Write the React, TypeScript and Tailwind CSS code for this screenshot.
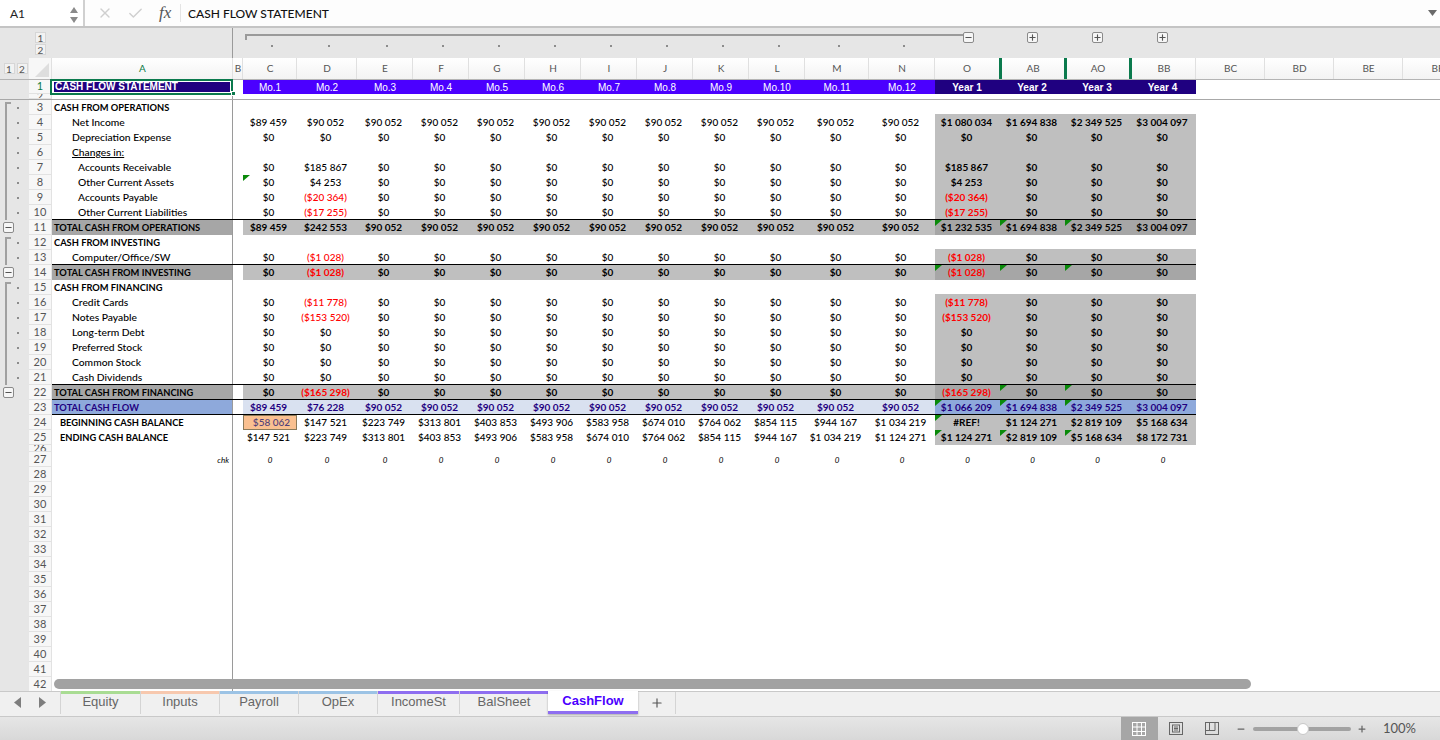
import { Check, Minus, Plus, X } from "lucide-react";

const COLS = [
  { name: "C", w: "w-[54px]" },
  { name: "D", w: "w-[60px]" },
  { name: "E", w: "w-[56px]" },
  { name: "F", w: "w-[56px]" },
  { name: "G", w: "w-[56px]" },
  { name: "H", w: "w-[56px]" },
  { name: "I", w: "w-[56px]" },
  { name: "J", w: "w-[56px]" },
  { name: "K", w: "w-[56px]" },
  { name: "L", w: "w-[56px]" },
  { name: "M", w: "w-[64px]" },
  { name: "N", w: "w-[66px]" },
];
// hw: the header cells run a little off the data columns because of the hidden-column marks
const YEARS = [
  { name: "O", w: "w-[65px]", hw: "w-[67px]" },
  { name: "AB", w: "w-[65px]", hw: "w-[65px]" },
  { name: "AO", w: "w-[65px]", hw: "w-[65px]" },
  { name: "BB", w: "w-[66px]", hw: "w-[64px]" },
];
const EXTRA = ["BC", "BD", "BE", "BF"];

const RUN = "$90 052";
// C, D and the run of ten equal months after them
const months = (c: string, d: string, rest: string = "$0") => [c, d, ...Array(10).fill(rest)];
const zeroYears = (o: string = "$0") => [o, "$0", "$0", "$0"];

const BEGIN = ["$58 062", "$147 521", "$223 749", "$313 801", "$403 853", "$493 906", "$583 958", "$674 010", "$764 062", "$854 115", "$944 167", "$1 034 219"];
const END = ["$147 521", "$223 749", "$313 801", "$403 853", "$493 906", "$583 958", "$674 010", "$764 062", "$854 115", "$944 167", "$1 034 219", "$1 124 271"];

type Kind = "head" | "item" | "total" | "flow" | "balance";
type Gutter = "top" | "line" | "minus" | "none";
type Row = {
  n: number;
  label: string;
  indent?: string;
  kind: Kind;
  underline?: boolean;
  gutter: Gutter;
  m?: string[];
  y?: string[];
  blankFill?: boolean;
  fillTop?: boolean;
  topLine?: boolean;
  flags?: number[];
};

const ROWS: Row[] = [
  { n: 3, label: "CASH FROM OPERATIONS", kind: "head", gutter: "top" },
  { n: 4, label: "Net Income", indent: "pl-[20px]", kind: "item", gutter: "line", fillTop: true, m: months("$89 459", RUN, RUN), y: ["$1 080 034", "$1 694 838", "$2 349 525", "$3 004 097"] },
  { n: 5, label: "Depreciation Expense", indent: "pl-[20px]", kind: "item", gutter: "line", m: months("$0", "$0"), y: zeroYears() },
  { n: 6, label: "Changes in:", indent: "pl-[20px]", underline: true, kind: "item", gutter: "line", blankFill: true },
  { n: 7, label: "Accounts Receivable", indent: "pl-[26px]", kind: "item", gutter: "line", m: months("$0", "$185 867"), y: zeroYears("$185 867") },
  { n: 8, label: "Other Current Assets", indent: "pl-[26px]", kind: "item", gutter: "line", m: months("$0", "$4 253"), y: zeroYears("$4 253"), flags: [0] },
  { n: 9, label: "Accounts Payable", indent: "pl-[26px]", kind: "item", gutter: "line", m: months("$0", "($20 364)"), y: zeroYears("($20 364)") },
  { n: 10, label: "Other Current Liabilities", indent: "pl-[26px]", kind: "item", gutter: "line", m: months("$0", "($17 255)"), y: zeroYears("($17 255)") },
  { n: 11, label: "TOTAL CASH FROM OPERATIONS", kind: "total", topLine: true, gutter: "minus", m: months("$89 459", "$242 553", RUN), y: ["$1 232 535", "$1 694 838", "$2 349 525", "$3 004 097"], flags: [12, 13, 14] },
  { n: 12, label: "CASH FROM INVESTING", kind: "head", gutter: "top" },
  { n: 13, label: "Computer/Office/SW", indent: "pl-[20px]", kind: "item", gutter: "line", fillTop: true, m: months("$0", "($1 028)"), y: zeroYears("($1 028)") },
  { n: 14, label: "TOTAL CASH FROM INVESTING", kind: "total", topLine: true, gutter: "minus", m: months("$0", "($1 028)"), y: zeroYears("($1 028)"), flags: [12, 13, 14] },
  { n: 15, label: "CASH FROM FINANCING", kind: "head", gutter: "top" },
  { n: 16, label: "Credit Cards", indent: "pl-[20px]", kind: "item", gutter: "line", fillTop: true, m: months("$0", "($11 778)"), y: zeroYears("($11 778)") },
  { n: 17, label: "Notes Payable", indent: "pl-[20px]", kind: "item", gutter: "line", m: months("$0", "($153 520)"), y: zeroYears("($153 520)") },
  { n: 18, label: "Long-term Debt", indent: "pl-[20px]", kind: "item", gutter: "line", m: months("$0", "$0"), y: zeroYears() },
  { n: 19, label: "Preferred Stock", indent: "pl-[20px]", kind: "item", gutter: "line", m: months("$0", "$0"), y: zeroYears() },
  { n: 20, label: "Common Stock", indent: "pl-[20px]", kind: "item", gutter: "line", m: months("$0", "$0"), y: zeroYears() },
  { n: 21, label: "Cash Dividends", indent: "pl-[20px]", kind: "item", gutter: "line", m: months("$0", "$0"), y: zeroYears() },
  { n: 22, label: "TOTAL CASH FROM FINANCING", kind: "total", topLine: true, gutter: "minus", m: months("$0", "($165 298)"), y: zeroYears("($165 298)"), flags: [13, 14] },
  { n: 23, label: "TOTAL CASH FLOW", kind: "flow", topLine: true, gutter: "none", m: months("$89 459", "$76 228", RUN), y: ["$1 066 209", "$1 694 838", "$2 349 525", "$3 004 097"], flags: [12, 13, 14] },
  { n: 24, label: "BEGINNING CASH BALANCE", indent: "pl-[8px]", kind: "balance", topLine: true, gutter: "none", m: BEGIN, y: ["#REF!", "$1 124 271", "$2 819 109", "$5 168 634"], flags: [12] },
  { n: 25, label: "ENDING CASH BALANCE", indent: "pl-[8px]", kind: "balance", gutter: "none", m: END, y: ["$1 124 271", "$2 819 109", "$5 168 634", "$8 172 731"], flags: [12, 13, 14] },
];

const EMPTY_ROWS = Array.from({ length: 15 }, (_, i) => i + 28);
const TABS = [
  { name: "Equity", w: "w-[80px]", bar: "bg-[#a9dc93]" },
  { name: "Inputs", w: "w-[79px]", bar: "bg-[#f7c8ae]" },
  { name: "Payroll", w: "w-[79px]", bar: "bg-[#9cc3e5]" },
  { name: "OpEx", w: "w-[79px]", bar: "bg-[#9cc3e5]" },
  { name: "IncomeSt", w: "w-[82px]", bar: "bg-[#8e6ef0]" },
  { name: "BalSheet", w: "w-[89px]", bar: "bg-[#8e6ef0]" },
];

function Flag() {
  return <span className="absolute left-0 top-0 h-[6px] w-[7px] bg-[#0a8a0a] [clip-path:polygon(0_0,100%_0,0_100%)]" />;
}

function RowNum({ n, active, h = "h-[15px]" }: { n: number; active?: boolean; h?: string }) {
  return (
    <div className={`flex w-[23px] shrink-0 items-center justify-center overflow-hidden border-b border-r border-[#e2e2e2] bg-[#f7f7f7] font-['Lato',sans-serif] text-[11px] ${h} ${active ? "text-[#0b7a45]" : "text-[#555]"}`}>
      {n}
    </div>
  );
}

function OutlineBox({ sign }: { sign: "minus" | "plus" }) {
  return (
    <span className="flex h-[11px] w-[11px] items-center justify-center rounded-[2px] border border-[#8a8a8a] bg-[#f6f6f6] text-[#555]">
      {sign === "minus" ? <Minus size={9} strokeWidth={3} /> : <Plus size={9} strokeWidth={3} />}
    </span>
  );
}

function GutterCell({ kind }: { kind: Gutter }) {
  if (kind === "none") return <div className="h-[15px] w-[29px] shrink-0 bg-[#e6e6e6]" />;
  if (kind === "minus") {
    return (
      <div className="flex h-[15px] w-[29px] shrink-0 items-center bg-[#e6e6e6] pl-[3px]">
        <OutlineBox sign="minus" />
      </div>
    );
  }
  return (
    <div className="flex h-[15px] w-[29px] shrink-0 bg-[#e6e6e6] pl-[5px]">
      {kind === "top" ? (
        <span className="mt-[2px] h-[13px] w-[6px] border-l-2 border-t-2 border-[#a0a0a0]" />
      ) : (
        <span className="h-[15px] w-[6px] border-l-2 border-[#a0a0a0]" />
      )}
      <span className="ml-[6px] mt-[7px] h-[2px] w-[2px] bg-[#8c8c8c]" />
    </div>
  );
}

function Sheet({ row }: { row: Row }) {
  const isTotal = row.kind === "total";
  const isFlow = row.kind === "flow";
  const labelBg = isTotal ? "bg-[#a6a6a6]" : isFlow ? "bg-[#8ea9db]" : "bg-white";
  const labelText = row.kind === "item" ? "text-[10.3px] font-medium leading-[14px] text-black" : isFlow ? "text-[9.3px] font-bold leading-[15px] text-[#1f0080]" : "text-[9.3px] font-bold leading-[15px] text-black";
  const monthBg = isTotal ? "bg-[#bfbfbf]" : isFlow ? "bg-[#d9e1f0]" : "";
  const yearBg = isTotal ? "bg-[#a6a6a6]" : isFlow ? "bg-[#8ea9db]" : "bg-[#bfbfbf]";
  const boldMonths = isTotal || isFlow;

  return (
    <div className="flex">
      <GutterCell kind={row.gutter} />
      <RowNum n={row.n} />
      <div className={`relative z-10 flex h-[15px] w-[1144px] shrink-0 font-['Lato',sans-serif] text-[10px] ${row.topLine ? "shadow-[0_-1px_0_#000]" : ""}`}>
        <div className={`w-[181px] shrink-0 overflow-hidden whitespace-nowrap border-r border-[#9a9a9a] pl-[2px] ${labelBg} ${labelText} ${row.indent ?? ""}`}>
          <span className={row.underline ? "underline" : ""}>{row.label}</span>
        </div>
        <div className="w-[10px] shrink-0" />
        {COLS.map((c, i) => {
          const v = row.m?.[i];
          const orange = row.n === 24 && i === 0;
          const color = v?.startsWith("(") ? "text-[#ff0000]" : isFlow ? "text-[#1f0080]" : orange ? "text-[#50407a]" : "text-black";
          return (
            <div key={c.name} className={`relative shrink-0 whitespace-nowrap text-center ${c.w} ${orange ? "border border-[#8a7a5a] bg-[#fac090] pl-[3px] leading-[12px]" : `pr-[3px] leading-[14px] ${monthBg}`} ${boldMonths ? "font-bold" : "font-medium"} ${color}`}>
              {row.flags?.includes(i) && <Flag />}
              {v}
            </div>
          );
        })}
        {YEARS.map((c, i) => {
          const v = row.y?.[i];
          const filled = row.y || row.blankFill;
          const color = v?.startsWith("(") ? "text-[#ff0000]" : isFlow ? "text-[#1f0080]" : "text-black";
          return (
            <div key={c.name} className={`relative shrink-0 whitespace-nowrap pr-[2px] text-center font-bold leading-[14px] ${c.w} ${filled ? yearBg : ""} ${row.fillTop ? "shadow-[0_-1px_0_#bfbfbf]" : ""} ${color}`}>
              {row.flags?.includes(i + 12) && <Flag />}
              {v}
            </div>
          );
        })}
      </div>
    </div>
  );
}

function ColHeader({ name, w, active, mark }: { name: string; w: string; active?: boolean; mark?: boolean }) {
  return (
    <div className={`flex h-full shrink-0 items-center justify-center overflow-hidden bg-gradient-to-b from-white to-[#f3f3f3] font-['Lato',sans-serif] text-[10px] ${w} ${active ? "text-[#0b7a45]" : "text-[#555]"} ${mark ? "border-r-[3px] border-[#0b7a4d]" : "border-r border-[#e0e0e0] pl-px"}`}>
      {name}
    </div>
  );
}

export default function App() {
  return (
    <div className="relative flex h-[740px] w-[1440px] flex-col overflow-hidden bg-white font-['Lato',sans-serif]">
      {/* formula bar */}
      <div className="flex h-[26px] shrink-0 items-center bg-[#fdfdfd]">
        <div className="flex h-full w-[85px] shrink-0 items-center justify-between border-r-2 border-[#d0d0d0] bg-white pl-[10px] pr-[2px] pt-px text-[12px] text-[#222]">
          <span>A1</span>
          <svg width="10" height="22" viewBox="0 0 10 22" className="mr-[2px]">
            <polygon points="5,4 9,10 1,10" fill="#8a8a8a" />
            <polygon points="5,20 9,14 1,14" fill="#8a8a8a" />
          </svg>
        </div>
        <div className="ml-[12px] flex w-[83px] shrink-0 items-center">
          <X size={16} strokeWidth={2} className="text-[#cfcfcf]" />
          <Check size={17} strokeWidth={2} className="ml-[14px] text-[#cfcfcf]" />
          <span className="ml-[15px] font-['Liberation_Serif',serif] text-[17px] italic text-[#555]">fx</span>
        </div>
        <div className="h-[18px] w-px shrink-0 bg-[#e4e4e4]" />
        <div className="ml-[7px] flex-1 pt-px text-[12px] font-medium text-[#111]">CASH FLOW STATEMENT</div>
        <svg width="10" height="8" viewBox="0 0 10 8" className="mr-[2px] shrink-0">
          <polygon points="0,1 9,1 4.5,7" fill="#6a6a6a" />
        </svg>
      </div>
      <div className="h-[2px] shrink-0 border-y border-[#c4c4c4] bg-white" />

      {/* column outline */}
      <div className="flex h-[30px] shrink-0 bg-[#e6e6e6]">
        <div className="flex w-[233px] shrink-0 border-r border-[#9a9a9a] pl-[35px] pt-[4px]">
          <div className="flex flex-col gap-px">
            <span className="flex h-[11px] w-[11px] items-center justify-center border border-[#d6d6d6] bg-[#f2f2f2] text-[10px] leading-none text-[#555]">1</span>
            <span className="flex h-[11px] w-[11px] items-center justify-center border border-[#d6d6d6] bg-[#f2f2f2] text-[10px] leading-none text-[#555]">2</span>
          </div>
        </div>
        <div className="w-[10px] shrink-0" />
        <div className="shrink-0">
          <div className="flex h-[14px] items-start pl-[2px] pt-[6px]">
            <div className="h-[6px] w-[718px] border-l-2 border-t-2 border-[#9a9a9a]" />
            <div className="-mt-[2px]"><OutlineBox sign="minus" /></div>
          </div>
          <div className="flex pl-[2px]">
            {COLS.map((c) => (
              <div key={c.name} className={`flex justify-center pt-[3px] ${c.w}`}>
                <span className="h-[2px] w-[2px] bg-[#8c8c8c]" />
              </div>
            ))}
          </div>
        </div>
        <div className="ml-[53px] flex gap-[54px] pt-[4px]">
          <OutlineBox sign="plus" />
          <OutlineBox sign="plus" />
          <OutlineBox sign="plus" />
        </div>
      </div>

      {/* grid */}
      <div className="relative flex-1 overflow-hidden">
        <div className="flex h-[21px]">
          <div className="flex w-[29px] shrink-0 items-center justify-center gap-[2px] bg-[#e6e6e6] pl-[2px]">
            <span className="flex h-[11px] w-[11px] items-center justify-center border border-[#d6d6d6] bg-[#f2f2f2] text-[10px] leading-none text-[#555]">1</span>
            <span className="flex h-[11px] w-[11px] items-center justify-center border border-[#d6d6d6] bg-[#f2f2f2] text-[10px] leading-none text-[#555]">2</span>
          </div>
          <div className="flex h-full w-[23px] shrink-0 items-end justify-end border-r border-[#e0e0e0] bg-[#f7f7f7] p-[2px]">
            <span className="h-[14px] w-[14px] bg-[#dedede] [clip-path:polygon(100%_0,100%_100%,0_100%)]" />
          </div>
          <ColHeader name="A" w="w-[181px]" active />
          <ColHeader name="B" w="w-[10px]" />
          {COLS.map((c) => <ColHeader key={c.name} name={c.name} w={c.w} />)}
          {YEARS.map((c, i) => <ColHeader key={c.name} name={c.name} w={c.hw} mark={i < 3} />)}
          {EXTRA.map((c) => <ColHeader key={c} name={c} w="w-[69px]" />)}
        </div>

        {/* row 1 */}
        <div className="flex border-t border-[#b4b4b4]">
          <div className="h-[14px] w-[29px] shrink-0 bg-[#e6e6e6]" />
          <RowNum n={1} active h="h-[14px]" />
          <div className="relative flex h-[14px] w-[1144px] shrink-0">
            <div className="w-[181px] shrink-0 border-r border-[#9a9a9a] p-[2px]">
              <div className="h-full overflow-hidden whitespace-nowrap bg-[#1f0080] pl-px font-['Liberation_Sans',sans-serif] text-[10px] font-bold leading-[10px] text-white">CASH FLOW STATEMENT</div>
            </div>
            <div className="w-[10px] shrink-0" />
            {COLS.map((c, i) => (
              <div key={c.name} className={`flex shrink-0 items-center justify-center bg-[#4b00ff] font-['Liberation_Sans',sans-serif] text-[10px] text-white ${c.w}`}>
                Mo.{i + 1}
              </div>
            ))}
            {YEARS.map((c, i) => (
              <div key={c.name} className={`flex shrink-0 items-center justify-center bg-[#1f0080] pr-px font-['Liberation_Sans',sans-serif] text-[10px] font-bold text-white ${c.w}`}>
                Year {i + 1}
              </div>
            ))}
            {/* selection frame over A1 */}
            <div className="absolute -left-[2px] -top-px h-[16px] w-[183px] border-2 border-[#0b7a4d]" />
            <div className="absolute left-[179px] top-[11px] h-[5px] w-[5px] border border-white bg-[#0b7a4d]" />
          </div>
        </div>

        {/* row 2 */}
        <div className="flex border-b border-[#a8a8a8]">
          <div className="h-[5px] w-[29px] shrink-0 bg-[#e6e6e6]" />
          <RowNum n={2} active={false} h="h-[5px]" />
          <div className="h-[5px] w-[181px] shrink-0 border-r border-[#9a9a9a]" />
        </div>

        {ROWS.map((r) => <Sheet key={r.n} row={r} />)}

        {/* row 26 */}
        <div className="flex">
          <div className="h-[7px] w-[29px] shrink-0 bg-[#e6e6e6]" />
          <RowNum n={26} h="h-[7px]" />
          <div className="h-[7px] w-[181px] shrink-0 border-r border-[#9a9a9a]" />
        </div>

        {/* row 27 */}
        <div className="flex">
          <div className="h-[15px] w-[29px] shrink-0 bg-[#e6e6e6]" />
          <RowNum n={27} />
          <div className="flex h-[15px] items-start font-['Lato',sans-serif] text-[8px] italic text-black">
            <div className="h-[15px] w-[181px] shrink-0 border-r border-[#9a9a9a] pr-[3px] text-right leading-[16px]">chk</div>
            <div className="w-[10px] shrink-0" />
            {[...COLS, ...YEARS].map((c) => (
              <div key={c.name} className={`shrink-0 text-center leading-[16px] ${c.w}`}>0</div>
            ))}
          </div>
        </div>

        {EMPTY_ROWS.map((n) => (
          <div key={n} className="flex">
            <div className="h-[15px] w-[29px] shrink-0 bg-[#e6e6e6]" />
            <RowNum n={n} />
            <div className="h-[15px] w-[181px] shrink-0 border-r border-[#9a9a9a]" />
          </div>
        ))}

        {/* horizontal scroll thumb */}
        <div className="absolute bottom-[2px] left-[54px] z-20 h-[10px] w-[1197px] rounded-full bg-[#a2a2a2]" />
      </div>

      {/* sheet tabs */}
      <div className="flex h-[26px] shrink-0 items-start border-y border-[#c9c9c9] bg-[#f0f0f0]">
        <div className="flex h-[21px] w-[60px] shrink-0 items-center gap-[16px] pl-[14px]">
          <svg width="8" height="11" viewBox="0 0 8 11"><polygon points="7,0 7,11 0,5.5" fill="#7d7d7d" /></svg>
          <svg width="8" height="11" viewBox="0 0 8 11"><polygon points="1,0 1,11 8,5.5" fill="#7d7d7d" /></svg>
        </div>
        {TABS.map((t) => (
          <div key={t.name} className={`-mt-px flex h-[23px] shrink-0 flex-col border-l border-[#d4d4d4] ${t.w}`}>
            <span className={`h-[3px] ${t.bar}`} />
            <span className="flex-1 text-center font-['Liberation_Sans',sans-serif] text-[13px] leading-[15px] text-[#666]">{t.name}</span>
          </div>
        ))}
        <div className="-mt-px flex h-[23px] w-[90px] shrink-0 flex-col bg-white shadow-[0_1px_2px_rgba(0,0,0,0.3)]">
          <span className="flex-1 pt-[2px] text-center font-['Liberation_Sans',sans-serif] text-[13px] font-bold leading-[15px] text-[#4b00ff]">CashFlow</span>
          <span className="h-[3px] bg-[#8e6ef0]" />
        </div>
        <div className="flex h-[22px] w-[38px] shrink-0 items-center justify-center border-r border-[#d4d4d4] text-[#555]">
          <Plus size={14} strokeWidth={2} />
        </div>
      </div>

      {/* status bar */}
      <div className="flex h-[23px] shrink-0 items-stretch justify-end bg-gradient-to-b from-[#e6e6e6] to-[#d8d8d8] pr-[24px]">
        <div className="flex w-[37px] items-center justify-center bg-[#a6a6a6]">
          <svg width="14" height="14" viewBox="0 0 14 14" fill="none" stroke="#fff" strokeWidth="1">
            <rect x="0.5" y="0.5" width="13" height="13" />
            <path d="M0 5H14M0 9.5H14M5 0V14M9.5 0V14" />
          </svg>
        </div>
        <div className="flex w-[36px] items-center justify-center">
          <svg width="14" height="13" viewBox="0 0 14 13" fill="none" stroke="#666" strokeWidth="1">
            <rect x="0.5" y="0.5" width="13" height="12" />
            <rect x="3.5" y="3" width="7" height="7" />
            <path d="M5 5H9M5 6.5H9M5 8H9" />
          </svg>
        </div>
        <div className="flex w-[36px] items-center justify-center">
          <svg width="14" height="13" viewBox="0 0 14 13" fill="none" stroke="#666" strokeWidth="1">
            <rect x="0.5" y="0.5" width="13" height="12" />
            <path d="M0.5 8.5H10V0.5M4.5 0.5V8.5" />
          </svg>
        </div>
        <div className="ml-[6px] flex items-center">
          <Minus size={10} strokeWidth={3} className="text-[#666]" />
          <div className="relative ml-[7px] h-[4px] w-[98px] rounded-full bg-[#a2a2a2]">
            <span className="absolute -top-[4px] left-[44px] h-[12px] w-[12px] rounded-full border border-[#c8c8c8] bg-white" />
          </div>
          <Plus size={10} strokeWidth={3} className="ml-[6px] text-[#666]" />
        </div>
        <div className="ml-[16px] flex items-center text-[13px] text-[#555]">100%</div>
      </div>
    </div>
  );
}
